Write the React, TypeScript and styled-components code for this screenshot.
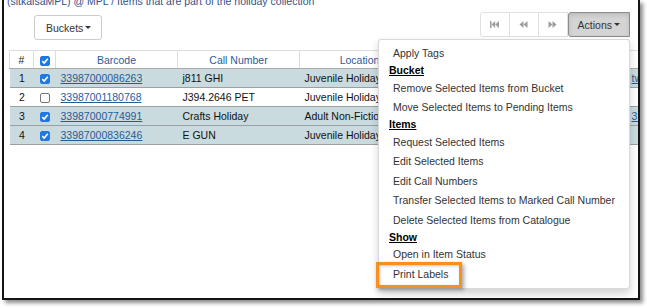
import React from 'react'
import styled, {createGlobalStyle} from 'styled-components'

const GlobalStyle = createGlobalStyle`
    html, body {
        margin: 0;
        padding: 0;
        background: #fff;
    }
    body {
        font-family: "Liberation Sans", Arial, sans-serif;
    }
`

const Stage = styled.div`
    width: 647px;
    height: 308px;
    padding-left: 2px;
    box-sizing: border-box;
    overflow: hidden;
    background: #fff;
`

const Frame = styled.div`
    position: relative;
    width: 638px;
    height: 300px;
    box-sizing: border-box;
    border: 2px solid #151515;
    border-top: none;
    box-shadow: 3px 3px 4px rgba(0, 0, 0, 0.45);
    overflow: hidden;
    background: #fff;
    font-size: 10.5px;
    color: #333;
`

const Breadcrumb = styled.div`
    margin-top: -6px;
    padding-left: 3px;
    line-height: 14px;
    white-space: nowrap;
    color: #34508a;
`

const Toolbar = styled.div`
    display: flex;
    justify-content: space-between;
    align-items: flex-start;
    margin-top: 4px;
    padding: 0 8px 0 30px;
`

const Button = styled.button<{ $active?: boolean }>`
    display: inline-flex;
    align-items: center;
    height: 25px;
    padding: 0 9px;
    box-sizing: border-box;
    font: inherit;
    color: #333;
    background: ${({$active}) => ($active ? '#d4d4d4' : '#fff')};
    border: 1px solid ${({$active}) => ($active ? '#8c8c8c' : '#ccc')};
    border-radius: 3px;
    box-shadow: ${({$active}) => ($active ? 'inset 0 2px 4px rgba(0,0,0,.125)' : 'none')};
`

const BucketsButton = styled(Button)`
    margin-top: 3px;
    padding: 0 10px 0 11px;
`

const BtnGroup = styled.div`
    display: flex;
`

const GroupButton = styled(Button)`
    border-radius: 0;
    margin-left: -1px;
    justify-content: center;

    &:first-child {
        margin-left: 0;
        border-radius: 3px 0 0 3px;
    }

    &:last-child {
        border-radius: 0 3px 3px 0;
    }
`

const NavButton = styled(GroupButton)`
    width: 30px;
    border-color: #e1e1e1;
    color: #9d9d9d;
`

const Caret = styled.span`
    display: inline-block;
    margin-left: 2px;
    width: 0;
    height: 0;
    border-top: 3px solid #333;
    border-left: 3px solid transparent;
    border-right: 3px solid transparent;
`

const Dropdown = styled.div`
    position: relative;
    display: flex;
`

const Menu = styled.ul`
    position: absolute;
    top: 100%;
    right: 0;
    z-index: 10;
    width: 252px;
    margin: 2px 0 0;
    padding: 3.75px 0;
    box-sizing: border-box;
    list-style: none;
    background: #fff;
    border: 1px solid rgba(0, 0, 0, 0.15);
    border-radius: 3px;
    box-shadow: 0 4.5px 9px rgba(0, 0, 0, 0.175);
`

const MenuItem = styled.li`
    position: relative;
    padding: 2.25px 14px;
    line-height: 15px;
    white-space: nowrap;
    color: #333;
`

const MenuHeader = styled.li`
    padding: 0 10px;
    line-height: 15px;
    font-weight: bold;
    text-decoration: underline;
    color: #000;
`

const Callout = styled.span`
    position: absolute;
    left: -3px;
    top: -2px;
    width: 86px;
    height: 26px;
    box-sizing: border-box;
    border: 3px solid #f7901e;
    box-shadow: 2px 2px 4px rgba(0, 0, 0, 0.35), inset 1px 1px 3px rgba(0, 0, 0, 0.25);
`

const Grid = styled.table`
    margin: 10px 0 0 5px;
    width: 720px;
    border-collapse: collapse;
    table-layout: fixed;
`

const HeadCell = styled.th<{ $plain?: boolean }>`
    height: 17px;
    padding: 0 4px;
    border: 1px solid #ddd;
    border-bottom: 1px solid #aaa;
    font-weight: normal;
    text-align: center;
    white-space: nowrap;
    overflow: hidden;
    color: ${({$plain}) => ($plain ? '#222' : '#2c5b99')};
`

const Row = styled.tr<{ $selected?: boolean }>`
    background: ${({$selected}) => ($selected ? '#c9dbdf' : '#fff')};
`

const Cell = styled.td<{ $center?: boolean }>`
    height: 18px;
    padding: 0 4px 0 5px;
    border-bottom: 1px solid #9a9fa1;
    white-space: nowrap;
    overflow: hidden;
    color: #111;
    text-align: ${({$center}) => ($center ? 'center' : 'left')};
`

const Link = styled.a`
    color: #2a5a96;
    text-decoration: underline;
`

const Box = styled.span<{ $checked?: boolean }>`
    display: inline-flex;
    align-items: center;
    justify-content: center;
    width: 10px;
    height: 10px;
    box-sizing: border-box;
    vertical-align: middle;
    border-radius: 2px;
    background: ${({$checked}) => ($checked ? '#1f78e4' : '#fff')};
    border: 1px solid ${({$checked}) => ($checked ? '#1f78e4' : '#777')};
`

const CheckBox = ({checked}: { checked?: boolean }) => (
    <Box $checked={checked}>
        {checked && (
            <svg width="8" height="8" viewBox="0 0 8 8">
                <path d="M1.3 4.2 L3.2 6 L6.8 1.8" fill="none" stroke="#fff" strokeWidth="1.6"/>
            </svg>
        )}
    </Box>
)

const NavIcon = ({kind}: { kind: 'first' | 'prev' | 'next' }) => (
    <svg width="9" height="7" viewBox="0 0 9 7" fill="currentColor">
        {kind === 'first' && (
            <>
                <rect x="0" y="0" width="1.5" height="7"/>
                <polygon points="5.2,0 1.5,3.5 5.2,7"/>
                <polygon points="9,0 5.2,3.5 9,7"/>
            </>
        )}
        {kind === 'prev' && (
            <>
                <polygon points="4.5,0 0.5,3.5 4.5,7"/>
                <polygon points="8.5,0 4.5,3.5 8.5,7"/>
            </>
        )}
        {kind === 'next' && (
            <>
                <polygon points="0.5,0 4.5,3.5 0.5,7"/>
                <polygon points="4.5,0 8.5,3.5 4.5,7"/>
            </>
        )}
    </svg>
)

interface IItem {
    id: number
    barcode: string
    callNumber: string
    location: string
    selected: boolean
    title?: string
}

const items: IItem[] = [
    {id: 1, barcode: '33987000086263', callNumber: 'j811 GHI', location: 'Juvenile Holiday', selected: true, title: 'twas'},
    {id: 2, barcode: '33987001180768', callNumber: 'J394.2646 PET', location: 'Juvenile Holiday', selected: false},
    {id: 3, barcode: '33987000774991', callNumber: 'Crafts Holiday', location: 'Adult Non-Fiction', selected: true, title: '3 holiday'},
    {id: 4, barcode: '33987000836246', callNumber: 'E GUN', location: 'Juvenile Holiday', selected: true},
]

type MenuEntry = { header?: boolean; label: string; callout?: boolean }

const menu: MenuEntry[] = [
    {label: 'Apply Tags'},
    {header: true, label: 'Bucket'},
    {label: 'Remove Selected Items from Bucket'},
    {label: 'Move Selected Items to Pending Items'},
    {header: true, label: 'Items'},
    {label: 'Request Selected Items'},
    {label: 'Edit Selected Items'},
    {label: 'Edit Call Numbers'},
    {label: 'Transfer Selected Items to Marked Call Number'},
    {label: 'Delete Selected Items from Catalogue'},
    {header: true, label: 'Show'},
    {label: 'Open in Item Status'},
    {label: 'Print Labels', callout: true},
]

const App: React.FC = () => (
    <>
        <GlobalStyle/>
        <Stage>
            <Frame>
                <Breadcrumb>(sitkaisaMPL) @ MPL / Items that are part of the holiday collection</Breadcrumb>

                <Toolbar>
                    <BucketsButton>Buckets<Caret/></BucketsButton>
                    <BtnGroup>
                        <NavButton><NavIcon kind="first"/></NavButton>
                        <NavButton><NavIcon kind="prev"/></NavButton>
                        <NavButton><NavIcon kind="next"/></NavButton>
                        <Dropdown>
                            <GroupButton $active>Actions <Caret/></GroupButton>
                            <Menu>
                                {menu.map((entry) =>
                                    entry.header ? (
                                        <MenuHeader key={entry.label}>{entry.label}</MenuHeader>
                                    ) : (
                                        <MenuItem key={entry.label}>
                                            {entry.label}
                                            {entry.callout && <Callout/>}
                                        </MenuItem>
                                    )
                                )}
                            </Menu>
                        </Dropdown>
                    </BtnGroup>
                </Toolbar>

                <Grid>
                    <colgroup>
                        <col style={{width: 24}}/>
                        <col style={{width: 22}}/>
                        <col style={{width: 122}}/>
                        <col style={{width: 122}}/>
                        <col style={{width: 120}}/>
                        <col style={{width: 207}}/>
                        <col style={{width: 103}}/>
                    </colgroup>
                    <thead>
                        <tr>
                            <HeadCell $plain>#</HeadCell>
                            <HeadCell><CheckBox checked/></HeadCell>
                            <HeadCell>Barcode</HeadCell>
                            <HeadCell>Call Number</HeadCell>
                            <HeadCell>Location</HeadCell>
                            <HeadCell/>
                            <HeadCell/>
                        </tr>
                    </thead>
                    <tbody>
                        {items.map((item) => (
                            <Row key={item.id} $selected={item.selected}>
                                <Cell $center>{item.id}</Cell>
                                <Cell $center><CheckBox checked={item.selected}/></Cell>
                                <Cell><Link>{item.barcode}</Link></Cell>
                                <Cell>{item.callNumber}</Cell>
                                <Cell>{item.location}</Cell>
                                <Cell/>
                                <Cell>{item.title && <Link>{item.title}</Link>}</Cell>
                            </Row>
                        ))}
                    </tbody>
                </Grid>
            </Frame>
        </Stage>
    </>
)

export default App
